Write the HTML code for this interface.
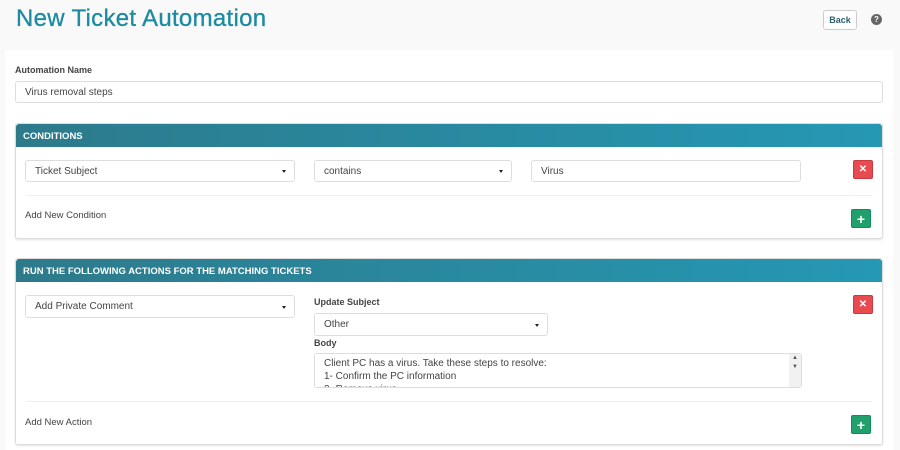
<!DOCTYPE html>
<html><head><style>
*{box-sizing:border-box;margin:0;padding:0}
body{width:900px;height:448px;background:#f9f9f9;font-family:"Liberation Sans",sans-serif;position:relative;overflow:hidden;color:#333}
.a{position:absolute}
h1{position:absolute;left:16px;top:5px;font-size:24px;font-weight:normal;color:#1d8aa0;letter-spacing:0.3px;-webkit-text-stroke:0.3px #1d8aa0}
.panel{left:5px;top:50px;width:888px;height:400px;background:#fff}
.inp{position:absolute;background:#fff;border:1px solid #ddd;border-radius:3px;font-size:10px;color:#444;padding-left:9px;display:flex;align-items:center}
.sel::after{content:"";position:absolute;right:8px;top:50%;margin-top:-1px;border-left:2.5px solid transparent;border-right:2.5px solid transparent;border-top:3px solid #222}
.card{position:absolute;left:15px;width:868px;background:#fff;border:1px solid #ddd;border-radius:3px;box-shadow:0 1px 2px rgba(0,0,0,.12)}
.hd{height:23px;background:linear-gradient(90deg,#2d7a8b,#2598b4);color:#fff;font-weight:bold;font-size:9.5px;padding:7px 0 0 7px;border-radius:3px 3px 0 0}
.lbl{position:absolute;font-size:9px;font-weight:bold;color:#444}
.txt{position:absolute;font-size:9.5px;color:#444}
.btn{position:absolute;width:20px;height:19px;border-radius:2px;color:#fff;font-weight:bold;display:flex;align-items:center;justify-content:center}
.red{background:#e84a4f;border:1px solid #c93b40;font-size:10px}
.grn{background:#1fa06d;border:1px solid #178a5c;font-size:14px}
.hr{position:absolute;left:10px;right:10px;height:1px;background:#eee}
</style></head><body>
<h1>New Ticket Automation</h1>
<div class="a" style="left:823px;top:10px;width:34px;height:20px;border:1px solid #ccc;border-radius:3px;background:#fff;font-size:9px;font-weight:bold;color:#2a5f6e;display:flex;align-items:center;justify-content:center">Back</div>
<div class="a" style="left:871px;top:14px;width:11px;height:11px;border-radius:50%;background:#666;color:#fff;font-size:8px;font-weight:bold;display:flex;align-items:center;justify-content:center">?</div>
<div class="a panel"></div>
<div class="lbl" style="left:15px;top:65px">Automation Name</div>
<div class="inp" style="left:15px;top:81px;width:868px;height:22px">Virus removal steps</div>

<div class="card" style="top:123px;height:116px"><div class="hd">CONDITIONS</div>
<div class="inp sel" style="left:9px;top:36px;width:270px;height:22px">Ticket Subject</div>
<div class="inp sel" style="left:298px;top:36px;width:198px;height:22px">contains</div>
<div class="inp" style="left:515px;top:36px;width:270px;height:22px">Virus</div>
<div class="btn red" style="left:837px;top:36px">✕</div>
<div class="hr" style="top:71px"></div>
<div class="txt" style="left:9px;top:86px">Add New Condition</div>
<div class="btn grn" style="left:835px;top:85px">+</div>
</div>

<div class="card" style="top:258px;height:187px"><div class="hd">RUN THE FOLLOWING ACTIONS FOR THE MATCHING TICKETS</div>
<div class="inp sel" style="left:9px;top:36px;width:270px;height:23px">Add Private Comment</div>
<div class="lbl" style="left:298px;top:38px">Update Subject</div>
<div class="inp sel" style="left:298px;top:54px;width:234px;height:23px">Other</div>
<div class="lbl" style="left:298px;top:79px">Body</div>
<div class="inp" style="left:298px;top:94px;width:488px;height:35px;align-items:flex-start;padding-top:3px;line-height:13px;overflow:hidden;display:block">Client PC has a virus. Take these steps to resolve:<br>1- Confirm the PC information<br>2- Remove virus</div>
<div class="a" style="left:773px;top:95px;width:12px;height:33px;background:#f1f1f1;font-size:6px;color:#555;text-align:center;line-height:9px">▲<br>▼</div>
<div class="btn red" style="left:837px;top:36px">✕</div>
<div class="hr" style="top:142px"></div>
<div class="txt" style="left:9px;top:158px">Add New Action</div>
<div class="btn grn" style="left:835px;top:156px">+</div>
</div>
</body></html>
